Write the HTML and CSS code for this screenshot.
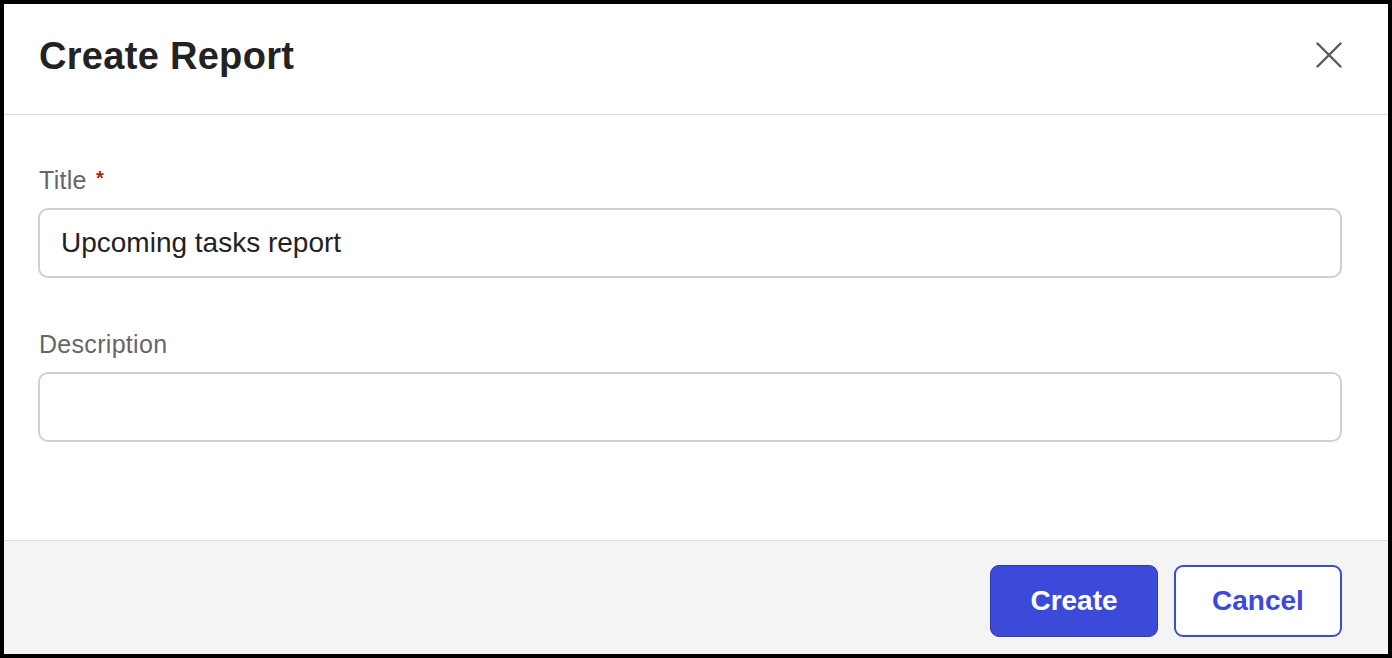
FILE: index.html
```html
<!DOCTYPE html>
<html lang="en">
<head>
<meta charset="utf-8">
<title>Create Report</title>
<link rel="stylesheet" href="styles.css">
</head>
<body>
<div class="modal">
  <header class="modal-header">
    <h1 class="modal-title">Create Report</h1>
    <button class="close-btn" type="button" aria-label="Close">
      <svg width="26" height="26" viewBox="0 0 26 26" aria-hidden="true">
        <path d="M1.5 1.5 L24.5 24.5 M24.5 1.5 L1.5 24.5" stroke="#5a5a5a" stroke-width="2.4" stroke-linecap="round" fill="none"/>
      </svg>
    </button>
  </header>
  <main class="modal-body">
    <div class="field">
      <label class="field-label" for="title">Title <span class="req">*</span></label>
      <input class="field-input" id="title" type="text" value="Upcoming tasks report">
    </div>
    <div class="field">
      <label class="field-label" for="desc">Description</label>
      <input class="field-input" id="desc" type="text" value="">
    </div>
  </main>
  <footer class="modal-footer">
    <button class="btn btn-primary" type="button">Create</button>
    <button class="btn btn-secondary" type="button">Cancel</button>
  </footer>
</div>
</body>
</html>
```
FILE: styles.css
```css
html, body {
  margin: 0;
  padding: 0;
  background: #000;
}
body {
  font-family: "Liberation Sans", Arial, sans-serif;
  padding: 4px;
  box-sizing: border-box;
  height: 658px;
}
.modal {
  background: #fff;
  height: 650px;
  display: flex;
  flex-direction: column;
}
.modal-header {
  box-sizing: border-box;
  height: 111px;
  border-bottom: 1px solid #dcdcdc;
  padding: 30px 46px 0 35px;
  display: flex;
  justify-content: space-between;
  align-items: flex-start;
}
.modal-title {
  margin: 0;
  font-size: 38px;
  line-height: 1.2;
  font-weight: 700;
  color: #222;
  letter-spacing: 0.3px;
}
.close-btn {
  background: none;
  border: 0;
  padding: 0;
  margin-top: 8px;
  width: 26px;
  height: 26px;
  cursor: pointer;
  display: flex;
}
.modal-body {
  flex: 1;
  padding: 48px 46px 0 34px;
  display: flex;
  flex-direction: column;
  gap: 51px;
}
.field {
  display: flex;
  flex-direction: column;
}
.field-label {
  font-size: 25px;
  line-height: 30px;
  color: #666;
  margin-bottom: 13px;
  padding-left: 1px;
  letter-spacing: 0.3px;
}
.req {
  color: #a8281e;
  font-weight: 700;
  font-size: 20px;
  vertical-align: 4px;
  margin-left: 2px;
}
.field-input {
  box-sizing: border-box;
  height: 70px;
  width: 100%;
  border: 2px solid #d0d0d0;
  border-radius: 10px;
  padding: 0 21px;
  font-family: "Liberation Sans", Arial, sans-serif;
  font-size: 28px;
  color: #222;
  background: #fff;
  outline: none;
}
.modal-footer {
  box-sizing: border-box;
  height: 114px;
  border-top: 1px solid #dcdcdc;
  background: #f4f4f4;
  padding: 24px 46px 0 34px;
  display: flex;
  justify-content: flex-end;
  align-items: flex-start;
  gap: 16px;
}
.btn {
  box-sizing: border-box;
  width: 168px;
  height: 72px;
  border-radius: 9px;
  font-family: "Liberation Sans", Arial, sans-serif;
  font-size: 28px;
  font-weight: 700;
  cursor: pointer;
}
.btn-primary {
  background: #3c4ad9;
  color: #fff;
  border: 1px solid #2f3bb5;
}
.btn-secondary {
  background: #fff;
  color: #3c4ad9;
  border: 2px solid #3c4ad9;
}
```
